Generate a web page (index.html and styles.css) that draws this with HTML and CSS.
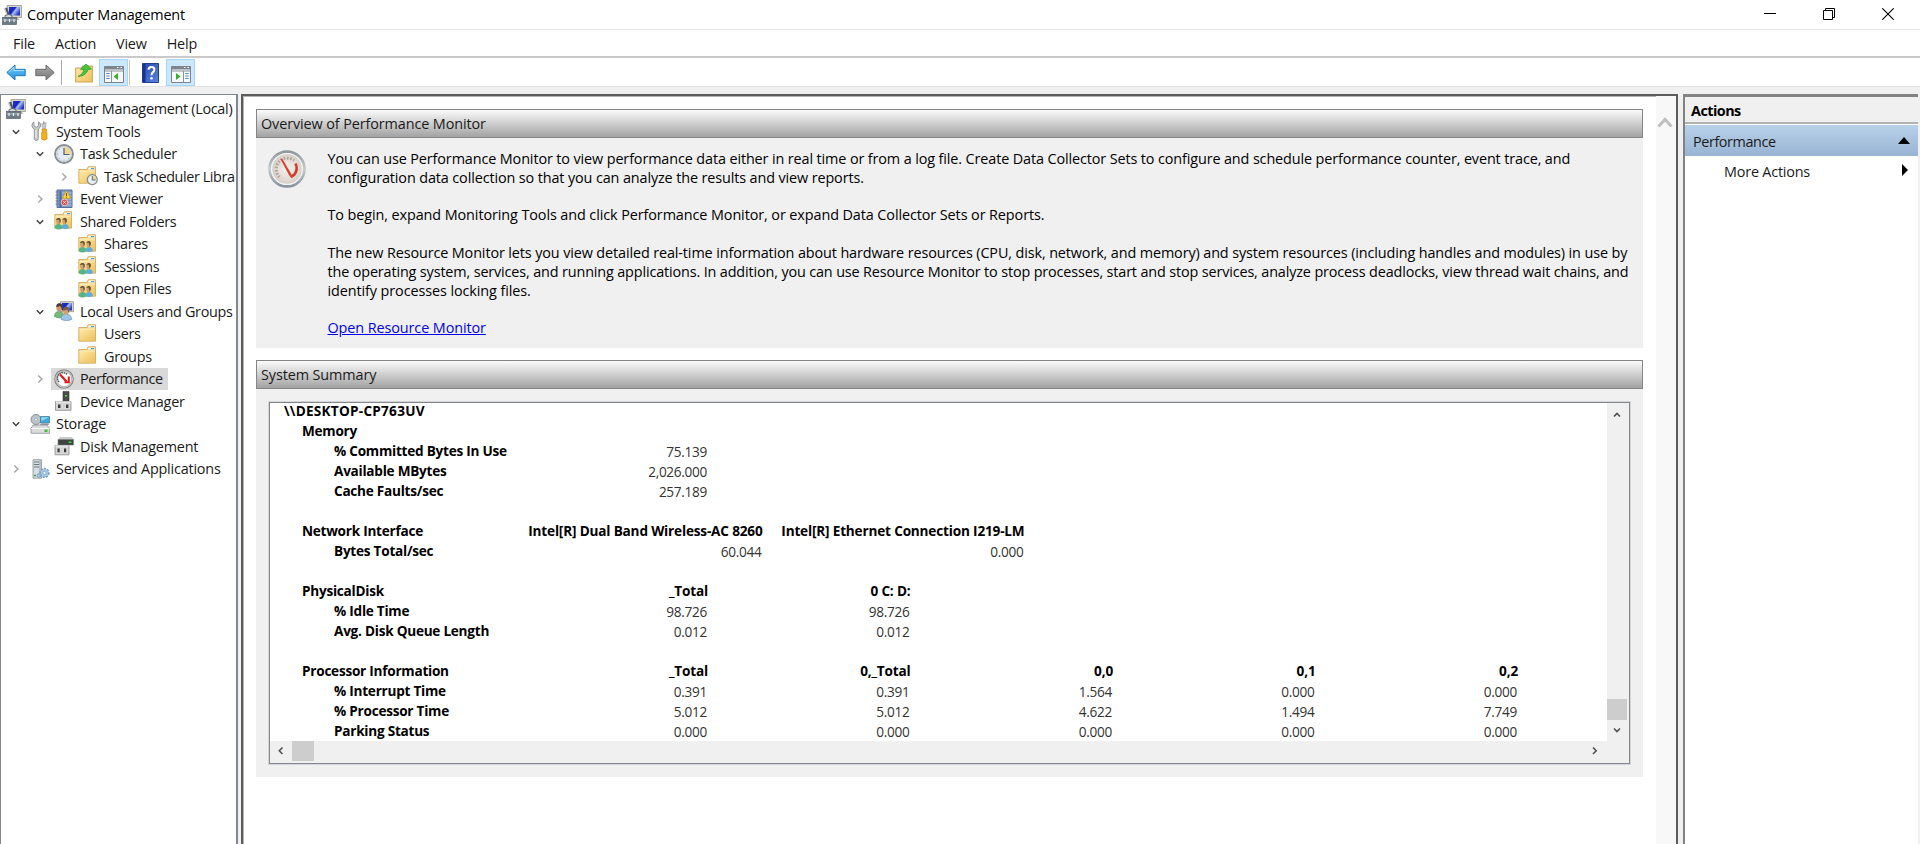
FILE: index.html
```
<!DOCTYPE html>
<html lang="en">
<head>
<meta charset="utf-8">
<title>Computer Management</title>
<link rel="stylesheet" href="styles.css">
</head>
<body>
<svg class="defs" width="0" height="0" aria-hidden="true">
  <defs>
    <linearGradient id="screen" x1="0" y1="0" x2="1" y2="0.6"><stop offset="0" stop-color="#2638b8"/><stop offset=".45" stop-color="#1420d0"/><stop offset=".6" stop-color="#a9c4f5"/><stop offset="1" stop-color="#2433c8"/></linearGradient>
    <linearGradient id="fold" x1="0" y1="0" x2="1" y2="1"><stop offset="0" stop-color="#ffe9a8"/><stop offset="1" stop-color="#eec05e"/></linearGradient>
    <linearGradient id="blueArrow" x1="0" y1="0" x2="0" y2="1"><stop offset="0" stop-color="#7ed0fa"/><stop offset="1" stop-color="#1b8fe0"/></linearGradient>
    <linearGradient id="grayArrow" x1="0" y1="0" x2="0" y2="1"><stop offset="0" stop-color="#a8a8a8"/><stop offset="1" stop-color="#7a7a7a"/></linearGradient>
    <linearGradient id="helpBlue" x1="0" y1="0" x2="1" y2="1"><stop offset="0" stop-color="#2448b0"/><stop offset="1" stop-color="#5b86e0"/></linearGradient>
    <radialGradient id="dial"><stop offset="0" stop-color="#f6f1ea"/><stop offset=".7" stop-color="#dfd8cf"/><stop offset="1" stop-color="#c4c2bf"/></radialGradient>
    <linearGradient id="rim" x1="0" y1="0" x2="0" y2="1"><stop offset="0" stop-color="#8f989c"/><stop offset=".5" stop-color="#c5cbce"/><stop offset="1" stop-color="#8793a0"/></linearGradient>

    <symbol id="computer" viewBox="0 0 20 20">
      <path d="M5 0.5h14.5v12H6z" fill="#d9d4c4" stroke="#8d8d85" stroke-width=".7"/>
      <path d="M7 2h11v8.5H7z" fill="url(#screen)"/>
      <path d="M11 12.5h5l1 2.5h-7z" fill="#b5b2a4"/>
      <path d="M3 3.5l2-1 3 7.500-2 1.500z" fill="#555"/><path d="M2 3l4 9" stroke="#c9ced1" stroke-width="1.2"/>
      <path d="M3 10.500q3.500-2 7 0V13H3z" fill="#d5dade" stroke="#46515a" stroke-width=".8"/>
      <rect x=".5" y="12.500" width="14" height="7" fill="#6f7b84" stroke="#536069" stroke-width=".7"/>
      <path d="M.8 15h13.400" stroke="#b3bec6"/><path d="M3 14v3M7.500 14v3M12 14v3" stroke="#e8edf0" stroke-width="1.200"/>
    </symbol>
    <symbol id="tools" viewBox="0 0 20 20">
      <path d="M4 .8v4l2.200 1.500L8.400 4.800v-4Q11 2 10.500 5 10.200 7 8.300 8v9.500Q8.300 19.500 6.300 19.500T4.300 17.500V8Q2 7 1.900 4.500 2 2 4 .8z" fill="#c7cbcd" stroke="#7d8588" stroke-width=".8"/>
      <path d="M6 9v8" stroke="#f4f5f5"/>
      <path d="M13 .6h1.500v7H13z" fill="#93999b"/><path d="M11.700 2.500q2 1 4.600-1L15.500 7.500h-3z" fill="#c5cacc" stroke="#888" stroke-width=".4"/>
      <path d="M12 8h4.500v2.500h-1v1H17v6.500q-2.700 2.500-5.400 0v-6.500H13v-1h-1z" fill="#f2b01e" stroke="#c98508" stroke-width=".6"/>
    </symbol>
    <symbol id="clock" viewBox="0 0 20 20">
      <circle cx="10" cy="10" r="9" fill="#dfe6ec" stroke="#888d91" stroke-width="1.800"/>
      <circle cx="10" cy="10" r="7.400" fill="#e3ebf3" stroke="#c2c8cc" stroke-width=".8"/>
      <path d="M10 10V3a7 7 0 0 1 7 7z" fill="#f5d493"/>
      <path d="M10 4v6.500h5.500" fill="none" stroke="#4a6078" stroke-width="1.200"/>
      <path d="M10 16.700v-1M3.300 10h1M5.300 5.300l.6.6M5.300 14.700l.6-.6M14.700 14.700l-.6-.6" stroke="#8a99a8" stroke-width=".8"/>
    </symbol>
    <symbol id="folder" viewBox="0 0 20 20">
      <path d="M.8 3.500h8l1.500-2.800h7.200v16.500H.8z" fill="#f0cd78" stroke="#cba552" stroke-width=".8"/>
      <path d="M10.800 1.500h6v2h-7z" fill="#fff"/><path d="M13 2h3.200v1.200H13z" fill="#4aa0e0"/>
      <path d="M1.500 5h15.500v11.500H1.500z" fill="url(#fold)"/>
      <path d="M1.500 5h15.500" stroke="#fff1c5"/>
    </symbol>
    <symbol id="taskfolder" viewBox="0 0 20 20">
      <use href="#folder"/>
      <circle cx="14.300" cy="13.600" r="5" fill="#e6eef5" stroke="#84898c" stroke-width="1.200"/>
      <path d="M14.300 13.800v-4a4 4 0 0 1 4 4z" fill="#f1d092"/>
      <path d="M14.300 10v4h3.200" fill="none" stroke="#465f78" stroke-width=".9"/>
    </symbol>
    <symbol id="shared" viewBox="0 0 20 20">
      <use href="#folder"/>
      <path d="M.7 17q0-4 3.800-4t3.800 4q-3.500 3-7.600 0z" fill="#55b584"/>
      <path d="M7.500 17q0-4 3.500-4t4 4q-3.500 2-7.500 0z" fill="#5cafd8"/>
      <ellipse cx="4.300" cy="10.400" rx="2.200" ry="2.800" fill="#d0a26c"/><path d="M1.800 9q.8-2.300 3-1.900 2.400.4 1.900 3.400l-1.100 2.300q.3-3-.7-4.200z" fill="#5b4c34"/>
      <ellipse cx="10.500" cy="10.400" rx="2.100" ry="2.800" fill="#d0a26c"/><path d="M8.100 9q1-2.300 3.200-1.900 2.200.5 1.400 3.600l-1.400 2q.3-2.900-.9-4.100z" fill="#64502f"/>
    </symbol>
    <symbol id="event" viewBox="0 0 20 20">
      <path d="M3 1h15v17.500H3z" fill="#7f9ac8" stroke="#566f9d"/>
      <path d="M5.500 1.500h2v16.500h-2z" fill="#4d6ba3"/><path d="M8 4h9.500M8 7h9.500M8 10h9.500M8 13h9.500M8 16h9.500" stroke="#bccbe5" stroke-width=".8"/>
      <path d="M1.500 3H5M1.500 6H5M1.500 9H5M1.500 12H5M1.500 15H5" stroke="#777d88" stroke-width="1.200"/>
      <path d="M12.500 1.700l4.200 7.600H8.300z" fill="#ffd534" stroke="#c29700" stroke-width=".6"/><path d="M12.500 4.200v3M12.500 7.800v.8" stroke="#6b5300"/>
      <circle cx="10.500" cy="13.400" r="3.300" fill="#df4a4a" stroke="#fff" stroke-width=".6"/><path d="M9.400 12.400l2.200 2M11.600 12.400l-2.200 2" stroke="#fff"/>
    </symbol>
    <symbol id="users" viewBox="0 0 20 20">
      <path d="M6.500.7h13v10h-13z" fill="#d9d4c4" stroke="#8d8d85" stroke-width=".7"/><path d="M8 2h10v7.500H8z" fill="url(#screen)"/>
      <path d="M.5 15.500q0-5 4.500-5t5 5q-4.500 3-9.500 0z" fill="#77b97a" stroke="#4f925b" stroke-width=".6"/>
      <ellipse cx="5.300" cy="6.500" rx="3" ry="3.900" fill="#c99a70"/><path d="M2.200 6q0-4 3.400-3.800 3 .2 3 3.500l-.7 3.300q-.5-3.600-2-4-1.500 1-3.700 1z" fill="#4b3d33"/>
      <path d="M7 18.500q0-5.500 5.200-5.500t5.500 5.500q-5 2.500-10.700 0z" fill="#9cc5e8" stroke="#658fb5" stroke-width=".6"/>
      <ellipse cx="12" cy="10" rx="2.900" ry="3.700" fill="#d3a272"/><path d="M9 9.500q0-4 3.300-3.800 3.400.3 2.900 3.700l-.8 2.500-1-3.300q-1.800 1-4.400.9z" fill="#795a3c"/>
    </symbol>
    <symbol id="perf" viewBox="0 0 20 20">
      <circle cx="10" cy="10" r="9.200" fill="#f8f8f8" stroke="#858585" stroke-width="1.200"/><circle cx="10" cy="10" r="7.800" fill="#fff" stroke="#bcbcbc" stroke-width="1.400"/>
      <path d="M5 13A5.500 5.500 0 0 1 13 5.300" fill="none" stroke="#555" stroke-width="1.500" stroke-dasharray="1.600 .6"/>
      <path d="M6 5.500l6.500 7" stroke="#e01919" stroke-width="2.200"/><path d="M14.800 7.500v5.800H10.500" fill="none" stroke="#e01919" stroke-width="2"/>
    </symbol>
    <symbol id="device" viewBox="0 0 20 20">
      <path d="M9 .5h6v11H9z" fill="#4b4b4b" stroke="#363636" stroke-width=".6"/><path d="M11 4h2v1.500h-2z" fill="#52dd4b"/>
      <path d="M1.500 10.500h15.500v8.800H1.500z" fill="#d6d6d6" stroke="#8a8a8a" stroke-width=".8"/><path d="M2 11h14.500" stroke="#f6f6f6"/>
      <path d="M4 13.500h2.400v3.500H4zM12 13.500h2.400v3.500H12z" fill="#3a3a3a"/>
    </symbol>
    <symbol id="storage" viewBox="0 0 20 20">
      <path d="M1 14.500l2-3.500h14l2.500 3.500v4.800H1z" fill="#d9dbdd" stroke="#83888c" stroke-width=".7"/><path d="M1 14.500h18.500" stroke="#fafafa"/><path d="M14.500 15.500h3v2.500h-3z" fill="#3fbd38"/>
      <circle cx="6" cy="5.500" r="5" fill="#bcc5ca" stroke="#7c868c" stroke-width=".9"/><circle cx="6" cy="5.500" r="1.300" fill="#fff" stroke="#8a969e" stroke-width=".6"/>
      <path d="M10.500 2.500h9v6.500h-9z" fill="#42a9dc" stroke="#497b96" stroke-width=".8"/><path d="M11.300 3.300h7.500L11.300 7z" fill="#90dbf4"/><path d="M11 9.500h7l1 1.500h-9z" fill="#8c9296"/>
    </symbol>
    <symbol id="disk" viewBox="0 0 20 20">
      <path d="M4 3.500L6 1h12l1.500 2.500z" fill="#c9cccd"/><path d="M4 3.500h15.500V9H4z" fill="#3e4243" stroke="#777" stroke-width=".6"/><path d="M14.500 5.500h3V7h-3z" fill="#42d13e"/>
      <path d="M1 9.500h14v9.300H1z" fill="#d6d6d6" stroke="#8a8a8a" stroke-width=".8"/><path d="M1.500 10h13" stroke="#f6f6f6"/><path d="M3.500 12.500h2.200v3.800H3.500zM10 12.500h2.200v3.800H10z" fill="#3a3a3a"/>
    </symbol>
    <symbol id="services" viewBox="0 0 20 20">
      <path d="M3 .7h8.500v18.500H3z" fill="#d7dde0" stroke="#849096" stroke-width=".8"/><path d="M9 1h2.200v18H9z" fill="#b4bec4"/><path d="M4 3h5M4 5.500h5M4 8h5" stroke="#6b7780"/><path d="M4 16.500h2" stroke="#39a13e" stroke-width="1.500"/>
      <circle cx="14.500" cy="14" r="4.300" fill="#a9c7e2" stroke="#7d9fc0" stroke-width="1.800" stroke-dasharray="2 1.200"/><circle cx="14.500" cy="14" r="3.500" fill="#a9c7e2"/><circle cx="14.500" cy="14" r="1.600" fill="#eef4f9" stroke="#6f96bb" stroke-width=".6"/>
      <circle cx="8.800" cy="16.500" r="1.800" fill="#a9c7e2" stroke="#6f96bb" stroke-width=".7"/>
    </symbol>
    <symbol id="down" viewBox="0 0 12 12"><path d="M2.800 4.300L6 7.500l3.200-3.200" fill="none" stroke="#404040" stroke-width="1.500"/></symbol>
    <symbol id="right" viewBox="0 0 12 12"><path d="M4.300 2.500L8 6 4.300 9.500" fill="none" stroke="#a6a6a6" stroke-width="1.400"/></symbol>
  </defs>
</svg>

<div class="window">
  <header class="titlebar">
    <svg class="ico app" viewBox="0 0 20 20"><use href="#computer"/></svg>
    <span class="caption">Computer Management</span>
    <div class="controls">
      <svg viewBox="0 0 12 12"><path d="M0 5.500h12" stroke="#000" fill="none"/></svg>
      <svg viewBox="0 0 12 12"><path d="M.5 2.500h9v9h-9zM2.500 2.500v-2h9v9h-2" stroke="#000" fill="none"/></svg>
      <svg viewBox="0 0 12 12"><path d="M.3.3l11.400 11.400M11.700.3L.3 11.700" stroke="#000" stroke-width="1.100" fill="none"/></svg>
    </div>
  </header>

  <nav class="menu"><span>File</span><span>Action</span><span>View</span><span>Help</span></nav>

  <div class="toolbar">
    <svg class="arrow" viewBox="0 0 20 17"><path d="M.8 8.500L9 1v4.300h10.200v6.400H9V16z" fill="url(#blueArrow)" stroke="#2579b5"/><path d="M2.800 8.200L8 3.500v3h10" fill="none" stroke="#b4e6ff" stroke-width=".8"/></svg>
    <svg class="arrow fwd" viewBox="0 0 20 17"><path d="M19.200 8.500L11 1v4.300H.8v6.400H11V16z" fill="url(#grayArrow)" stroke="#6c6c6c"/></svg>
    <i class="sep"></i>
    <svg class="up" viewBox="0 0 18 20"><path d="M.6 5h6l1-2h9.800v16H.6z" fill="url(#fold)" stroke="#c79f4e" stroke-width=".9"/><path d="M3 13.500Q8 12 9 6.500L5.500 6.300 11 1l5.500 5-3.300.5Q11 13 3 13.500z" fill="#42c63a" stroke="#279325" stroke-width=".7"/></svg>
    <span class="toggle">
      <svg viewBox="0 0 20 17"><path d="M.5.5h19v16H.5z" fill="#f7f8f9" stroke="#7b848d"/><path d="M1 1h18v2.500H1z" fill="#7c8791"/><path d="M13 1.500h1.500M16.500 1.500H18" stroke="#fff"/><path d="M1 5h18M7.500 5v11" stroke="#87919a"/><path d="M2.200 7.500h3.500M2.200 10h3.500M2.200 12.500h3.500" stroke="#5b87c5"/><path d="M14 7v7l-4.500-3.500z" fill="#38b22c"/></svg>
    </span>
    <i class="sep short"></i>
    <svg class="help" viewBox="0 0 17 20"><path d="M.5.500h16v19H.5z" fill="url(#helpBlue)" stroke="#203f93"/><path d="M1 1h2.500v18H1z" fill="#18348a"/><path d="M6.500 6.800Q6.600 4 9.500 4t2.900 2.600Q12.400 8.300 10.800 9.400 9.500 10.400 9.500 12.200" fill="none" stroke="#fff" stroke-width="2"/><circle cx="9.500" cy="15.200" r="1.300" fill="#fff"/></svg>
    <span class="toggle">
      <svg viewBox="0 0 20 17"><path d="M.5.500h19v16H.5z" fill="#f7f8f9" stroke="#7b848d"/><path d="M1 1h18v2.500H1z" fill="#7c8791"/><path d="M13 1.500h1.500M16.500 1.500H18" stroke="#fff"/><path d="M1 5h18M12.500 5v11" stroke="#87919a"/><path d="M14.200 7.500h3.500M14.200 10h3.500M14.200 12.500h3.500" stroke="#5b87c5"/><path d="M5 7v7l4.500-3.500z" fill="#38b22c"/></svg>
    </span>
  </div>

  <main class="panes">
    <aside class="tree">
      <div class="row d0"><div class="node"><svg><use href="#computer"/></svg><span>Computer Management (Local)</span></div></div>
      <div class="row d1"><svg class="tg"><use href="#down"/></svg><div class="node"><svg><use href="#tools"/></svg><span>System Tools</span></div></div>
      <div class="row d2"><svg class="tg"><use href="#down"/></svg><div class="node"><svg><use href="#clock"/></svg><span>Task Scheduler</span></div></div>
      <div class="row d3"><svg class="tg"><use href="#right"/></svg><div class="node tight"><svg><use href="#taskfolder"/></svg><span>Task Scheduler Libra</span></div></div>
      <div class="row d2"><svg class="tg"><use href="#right"/></svg><div class="node"><svg><use href="#event"/></svg><span>Event Viewer</span></div></div>
      <div class="row d2"><svg class="tg"><use href="#down"/></svg><div class="node"><svg><use href="#shared"/></svg><span>Shared Folders</span></div></div>
      <div class="row d3"><i class="tg"></i><div class="node"><svg><use href="#shared"/></svg><span>Shares</span></div></div>
      <div class="row d3"><i class="tg"></i><div class="node"><svg><use href="#shared"/></svg><span>Sessions</span></div></div>
      <div class="row d3"><i class="tg"></i><div class="node"><svg><use href="#shared"/></svg><span>Open Files</span></div></div>
      <div class="row d2"><svg class="tg"><use href="#down"/></svg><div class="node"><svg><use href="#users"/></svg><span>Local Users and Groups</span></div></div>
      <div class="row d3"><i class="tg"></i><div class="node"><svg><use href="#folder"/></svg><span>Users</span></div></div>
      <div class="row d3"><i class="tg"></i><div class="node"><svg><use href="#folder"/></svg><span>Groups</span></div></div>
      <div class="row d2"><svg class="tg"><use href="#right"/></svg><div class="node selected tight"><svg><use href="#perf"/></svg><span>Performance</span></div></div>
      <div class="row d2"><i class="tg"></i><div class="node loose"><svg><use href="#device"/></svg><span>Device Manager</span></div></div>
      <div class="row d1"><svg class="tg"><use href="#down"/></svg><div class="node loose"><svg><use href="#storage"/></svg><span>Storage</span></div></div>
      <div class="row d2"><i class="tg"></i><div class="node loose"><svg><use href="#disk"/></svg><span>Disk Management</span></div></div>
      <div class="row d1"><svg class="tg"><use href="#right"/></svg><div class="node loose"><svg><use href="#services"/></svg><span>Services and Applications</span></div></div>
    </aside>

    <section class="content">
      <div class="doc">
        <h2 class="bar">Overview of Performance Monitor</h2>
        <div class="overview">
          <svg class="gauge" viewBox="0 0 38 38">
            <circle cx="19" cy="19" r="17.400" fill="url(#dial)" stroke="url(#rim)" stroke-width="2.800"/>
            <circle cx="19" cy="19" r="15.400" fill="none" stroke="#f4f4f2" stroke-width="1.400"/>
            <path d="M11.500 27A11 11 0 0 1 26 10.500" fill="none" stroke="#a9a39c" stroke-width="3" stroke-dasharray="1.600 1.600"/>
            <path d="M27.500 13.500q3 6-1.500 11.500l-3.500 2" fill="none" stroke="#cf3a2b" stroke-width="2.600"/>
            <path d="M12.500 9l1.600-.6 9.600 16.400-2.200 1.200z" fill="#e0392c"/>
          </svg>
          <div class="prose">
            <p><span class="l1">You can use Performance Monitor to view performance data either in real time or from a log file. Create Data Collector Sets to configure and schedule performance counter, event trace, and</span><br><span class="l1">configuration data collection so that you can analyze the results and view reports.</span></p>
            <p><span class="l3">To begin, expand Monitoring Tools and click Performance Monitor, or expand Data Collector Sets or Reports.</span></p>
            <p><span class="l1">The new Resource Monitor lets you view detailed real-time information about hardware resources (CPU, disk, network, and memory) and system resources (including handles and modules) in use by</span><br><span class="l5">the operating system, services, and running applications. In addition, you can use Resource Monitor to stop processes, start and stop services, analyze process deadlocks, view thread wait chains, and</span><br><span class="l3">identify processes locking files.</span></p>
            <p><a class="l3">Open Resource Monitor</a></p>
          </div>
        </div>

        <h2 class="bar">System Summary</h2>
        <div class="summary">
          <div class="report">
            <div class="data">
              <div class="r host"><b>\\DESKTOP-CP763UV</b></div>
              <div class="r group"><b>Memory</b></div>
              <div class="r"><b>% Committed Bytes In Use</b><span>75.139</span></div>
              <div class="r"><b>Available MBytes</b><span>2,026.000</span></div>
              <div class="r"><b>Cache Faults/sec</b><span>257.189</span></div>
              <div class="r"></div>
              <div class="r group net"><b>Network Interface</b><strong>Intel[R] Dual Band Wireless-AC 8260</strong><strong>Intel[R] Ethernet Connection I219-LM</strong></div>
              <div class="r net"><b>Bytes Total/sec</b><span>60.044</span><span>0.000</span></div>
              <div class="r"></div>
              <div class="r group"><b>PhysicalDisk</b><strong>_Total</strong><strong>0 C: D:</strong></div>
              <div class="r"><b>% Idle Time</b><span>98.726</span><span>98.726</span></div>
              <div class="r"><b>Avg. Disk Queue Length</b><span>0.012</span><span>0.012</span></div>
              <div class="r"></div>
              <div class="r group"><b>Processor Information</b><strong>_Total</strong><strong>0,_Total</strong><strong>0,0</strong><strong>0,1</strong><strong>0,2</strong></div>
              <div class="r"><b>% Interrupt Time</b><span>0.391</span><span>0.391</span><span>1.564</span><span>0.000</span><span>0.000</span></div>
              <div class="r"><b>% Processor Time</b><span>5.012</span><span>5.012</span><span>4.622</span><span>1.494</span><span>7.749</span></div>
              <div class="r"><b>Parking Status</b><span>0.000</span><span>0.000</span><span>0.000</span><span>0.000</span><span>0.000</span></div>
            </div>
            <div class="vbar">
              <svg viewBox="0 0 20 20"><path d="M7 11.500l3-3 3 3" fill="none" stroke="#505050" stroke-width="1.600"/></svg>
              <i class="track"></i><i class="vthumb"></i>
              <svg viewBox="0 0 20 20"><path d="M7 8.500l3 3 3-3" fill="none" stroke="#505050" stroke-width="1.600"/></svg>
            </div>
            <div class="hbar">
              <svg viewBox="0 0 22 20"><path d="M12.500 6.500l-3.200 3.300 3.200 3.200" fill="none" stroke="#505050" stroke-width="1.600"/></svg>
              <i class="hthumb"></i><i class="track"></i>
              <svg viewBox="0 0 22 20"><path d="M8 6.500l3.200 3.300L8 13" fill="none" stroke="#505050" stroke-width="1.600"/></svg>
            </div>
            <i class="corner"></i>
          </div>
        </div>
      </div>
      <div class="outer-scroll"><svg viewBox="0 0 16 12"><path d="M1.500 10.500L8 3.500l6.500 7" fill="none" stroke="#bfbfbf" stroke-width="3"/></svg></div>
    </section>

    <aside class="actions">
      <div class="head">Actions</div>
      <div class="subject"><span>Performance</span><svg viewBox="0 0 12 7"><path d="M0 7l6-7 6 7z"/></svg></div>
      <div class="more"><span>More Actions</span><svg viewBox="0 0 6 12"><path d="M0 0l6 6-6 6z"/></svg></div>
    </aside>
  </main>
</div>
</body>
</html>
```
FILE: styles.css
```
* { box-sizing: border-box; }
body { margin: 0; background: #fff; color: #1a1a1a; font: 14.400px/20px "Open Sans", "Noto Sans", sans-serif; overflow: hidden; }
.defs { position: absolute; }
svg { display: block; flex: none; }
i { display: block; flex: none; }
.window { width: 1920px; height: 844px; display: flex; flex-direction: column; background: #f0f0f0; white-space: nowrap; }

.titlebar { height: 30px; flex: none; background: #fff; border-bottom: 1px solid #e6e6e6; display: flex; align-items: center; padding-left: 2px; color: #000; }
.ico { width: 20px; height: 20px; }
.caption { margin-left: 5px; letter-spacing: -.13px; }
.controls { margin-left: auto; display: flex; gap: 47px; padding: 0 26px 2px 0; }
.controls svg { width: 12px; height: 12px; }

.menu { height: 28px; flex: none; background: #fff; border-bottom: 2px solid #c9c9cc; display: flex; align-items: center; padding: 2px 0 0 13px; gap: 20px; letter-spacing: -.2px; }

.toolbar { height: 29px; flex: none; background: #fff; border-bottom: 1px solid #e2e2e2; display: flex; align-items: center; padding: 1px 0 0 6px; }
.arrow { width: 20px; height: 17px; }
.fwd { margin-left: 9px; }
.sep { width: 1px; height: 25px; background: #a9a9a9; margin-left: 6px; }
.up { width: 18px; height: 20px; margin-left: 13px; }
.toggle { width: 29px; height: 27px; margin-left: 6px; background: #cce8ff; border: 1px solid #a6d5fa; display: flex; align-items: center; justify-content: center; padding-top: 3px; }
.toggle svg { width: 20px; height: 17px; }
.short { margin-left: 1px; background: #c5c5c5; }
.help { width: 17px; height: 20px; margin-left: 12px; }
.help + .toggle { margin-left: 7px; }

.panes { flex: 1; min-height: 0; padding-top: 7px; display: grid; grid-template-columns: 238px 1437px 237px; column-gap: 3px; }
.tree { background: #fff; border: solid #828790; border-width: 1px 2px 0 1px; padding-top: 3px; overflow: hidden; }
.row { height: 22.500px; display: flex; align-items: center; }
.tg { width: 12px; height: 12px; flex: none; margin-right: 5px; }
.d0 { padding-left: 2px; }
.d1 { padding-left: 9px; }
.d2 { padding-left: 33px; }
.d3 { padding-left: 57px; }
.node { display: flex; align-items: center; height: 22px; padding: 0 5px 0 3px; gap: 6px; letter-spacing: -.3px; }
.d0 .node { gap: 7px; }
.node svg { width: 20px; height: 20px; margin-bottom: 1px; }
.tight { letter-spacing: -.4px; }
.loose { letter-spacing: -.2px; }
.selected { background: #d9d9d9; }

.content { background: #fff; border: solid #5c5c5c; border-width: 2px 2px 0 2px; box-shadow: inset 1px 1px #b4b4b4; display: flex; justify-content: space-between; padding-left: 13px; }
.doc { width: 1387px; padding-top: 13px; }
.bar { margin: 0; height: 29px; border: 1px solid #858585; background: linear-gradient(#fbfbfb, #a2a2a2); font-size: 14.400px; font-weight: 400; line-height: 27px; padding-left: 4px; letter-spacing: -.1px; }
.overview { background: #f0f0f0; height: 210px; margin-bottom: 12px; display: flex; padding: 12px 0 0 12px; }
.gauge { width: 38px; height: 38px; }
.prose { margin-left: 21.500px; color: #000; }
.prose p { margin: 0 0 18.800px; line-height: 18.800px; }
.prose a { color: #0000ee; text-decoration: underline; }
.l1 { letter-spacing: -.116px; }
.l3 { letter-spacing: -.09px; }
.l5 { letter-spacing: -.14px; }
.summary { background: #f0f0f0; height: 388px; padding: 13px; }
.report { width: 1361px; height: 362px; border: 1px solid #828790; outline: 1px solid #d5d5d5; background: #fff; display: grid; grid-template: 338px 22px / 1337px 22px; }
.data { overflow: hidden; font-size: 13.600px; }
.r { display: flex; height: 20.070px; line-height: 20px; color: #333; }
.r.host { height: 17.500px; line-height: 15px; }
.r b { width: 438px; margin-right: -202.500px; padding-left: 64px; letter-spacing: -.25px; }
.r b, .r strong { color: #000; font-weight: 700; }
.r.host b { padding-left: 14px; letter-spacing: .24px; }
.r.group b { padding-left: 32px; }
.r span, .r strong { width: 202.500px; text-align: right; }
.r span { padding-top: 1px; padding-right: 1px; letter-spacing: -.3px; }
.r strong { letter-spacing: -.18px; }
.net > :nth-child(2) { width: 257px; }
.net > :nth-child(3) { width: 262px; }
.vbar { background: #f0f0f0; display: flex; flex-direction: column; padding: 2px 0 1px; }
.vbar svg { width: 20px; height: 20px; }
.track { flex: 1; }
.vthumb { width: 20px; height: 21px; background: #cdcdcd; }
.hbar { background: #f0f0f0; display: flex; }
.hbar svg { width: 22px; height: 20px; }
.hthumb { width: 22px; height: 20px; background: #cdcdcd; }
.corner { background: #f0f0f0; }
.outer-scroll { width: 20px; background: #f8f8f8; padding: 20px 0 0 1px; }
.outer-scroll svg { width: 16px; height: 12px; }

.actions { margin-left: 2px; background: #fff; border-left: 2px solid #828282; border-top: 3px solid #828282; }
.head { height: 27px; background: #f0f0f0; border-bottom: 2px solid #b2b2b2; font-weight: 700; color: #000; line-height: 28px; padding-left: 6px; letter-spacing: -.55px; }
.subject { height: 31px; margin-top: 1px; background: linear-gradient(#b9d1ea, #98b4d3); display: flex; align-items: center; justify-content: space-between; padding: 3px 8px 0 8px; letter-spacing: -.4px; }
.subject svg { width: 12px; height: 7px; margin-bottom: 3px; }
.more { display: flex; align-items: center; justify-content: space-between; height: 32px; padding: 0 10px 0 39px; letter-spacing: -.2px; }
.more svg { width: 6px; height: 12px; margin-bottom: 4px; }
```
